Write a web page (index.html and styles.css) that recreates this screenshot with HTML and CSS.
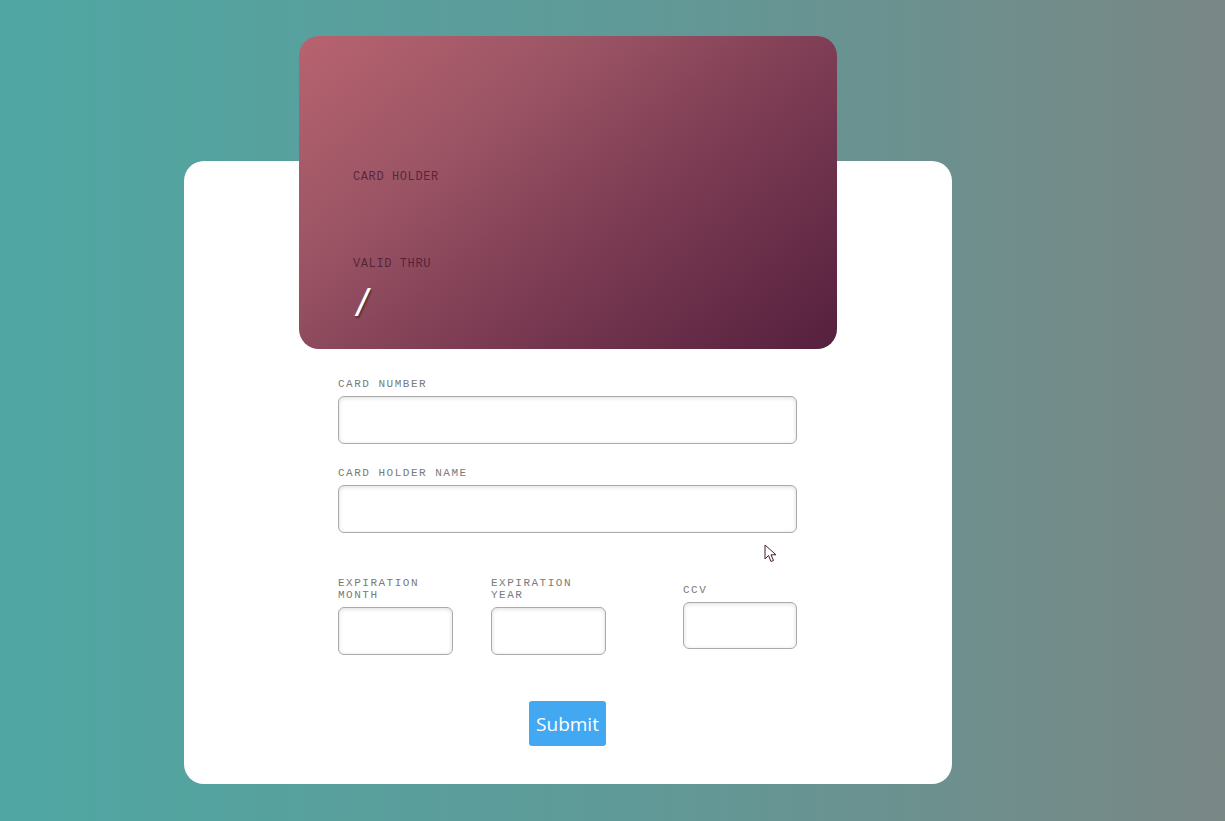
FILE: index.html
```html
<!DOCTYPE html>
<html lang="en">
<head>
<meta charset="utf-8">
<title>Card form</title>
<link rel="stylesheet" href="styles.css">
</head>
<body>
<div class="page">
  <div class="card">
    <div class="card-label">CARD HOLDER</div>
    <div class="card-name"></div>
    <div class="card-label">VALID THRU</div>
    <div class="card-date">/</div>
  </div>
  <form class="panel">
    <div class="group">
      <label class="lbl">CARD NUMBER</label>
      <input class="field" type="text">
    </div>
    <div class="group">
      <label class="lbl">CARD HOLDER NAME</label>
      <input class="field" type="text">
    </div>
    <div class="row">
      <div class="col">
        <label class="lbl">EXPIRATION MONTH</label>
        <input class="field" type="text">
      </div>
      <div class="col">
        <label class="lbl">EXPIRATION YEAR</label>
        <input class="field" type="text">
      </div>
      <div class="col col-ccv">
        <label class="lbl">CCV</label>
        <input class="field field-ccv" type="text">
      </div>
    </div>
    <div class="actions">
      <button class="submit" type="button">Submit</button>
    </div>
    <svg class="cursor" width="14" height="20" viewBox="0 0 14 20"><path d="M1 1 L1 15 L4.5 11.5 L7 17.5 L9.5 16.5 L7 10.8 L12 10.8 Z" fill="#fff" stroke="#4a1a30" stroke-width="1"/></svg>
  </form>
</div>
</body>
</html>
```
FILE: styles.css
```css
html, body {
  margin: 0;
  padding: 0;
}
body {
  width: 1225px;
  height: 821px;
  overflow: hidden;
  background: linear-gradient(90deg, #4fa7a3 0%, #5f9a98 50%, #798785 100%);
  font-family: "Liberation Mono", monospace;
}
.page {
  padding-top: 36px;
  margin-left: 184px;
  width: 768px;
}
.card {
  position: relative;
  z-index: 1;
  margin-left: 115px;
  width: 538px;
  height: 313px;
  box-sizing: border-box;
  border-radius: 20px;
  background: linear-gradient(142deg, #b8636f 0%, #9c5565 30%, #7a3a52 62%, #55203e 100%);
  padding: 135px 0 0 54px;
  display: flex;
  flex-direction: column;
}
.card-label {
  font-size: 12px;
  line-height: 13px;
  letter-spacing: 0.6px;
  color: rgba(65, 22, 45, 0.75);
}
.card-name {
  height: 74px;
}
.card-date {
  margin-top: 11px;
  margin-left: 0;
  font-family: "DejaVu Sans Mono", monospace;
  font-size: 34px;
  line-height: 38px;
  color: #fff;
  text-shadow: 1px 2px 2px rgba(0, 0, 0, 0.45);
}
.panel {
  position: relative;
  margin-top: -188px;
  background: #fff;
  border-radius: 20px;
  padding: 217px 155px 38px 154px;
  display: flex;
  flex-direction: column;
}
.group {
  display: flex;
  flex-direction: column;
  margin-bottom: 23px;
}
.lbl {
  display: block;
  font-size: 11px;
  line-height: 12px;
  letter-spacing: 1.5px;
  color: #7a7a7a;
  margin-bottom: 6px;
}
.field {
  box-sizing: border-box;
  height: 48px;
  width: 100%;
  border: 1px solid #aaa;
  border-radius: 6px;
  box-shadow: inset 0 1px 4px rgba(0, 0, 0, 0.14);
  background: #fff;
  margin: 0;
}
.row {
  margin-top: 21px;
  display: flex;
  align-items: center;
}
.col {
  width: 115px;
  display: flex;
  flex-direction: column;
}
.col + .col {
  margin-left: 38px;
}
.col-ccv {
  width: 114px;
  margin-left: auto !important;
}
.field-ccv {
  height: 47px;
}
.actions {
  margin-top: 46px;
  display: flex;
  justify-content: center;
}
.submit {
  height: 45px;
  padding: 0 7px;
  border: none;
  border-radius: 3px;
  background: #42a8f2;
  color: #fff;
  font-family: "Open Sans", sans-serif;
  font-size: 19px;
}
.cursor {
  position: absolute;
  left: 580px;
  top: 383px;
}
```
